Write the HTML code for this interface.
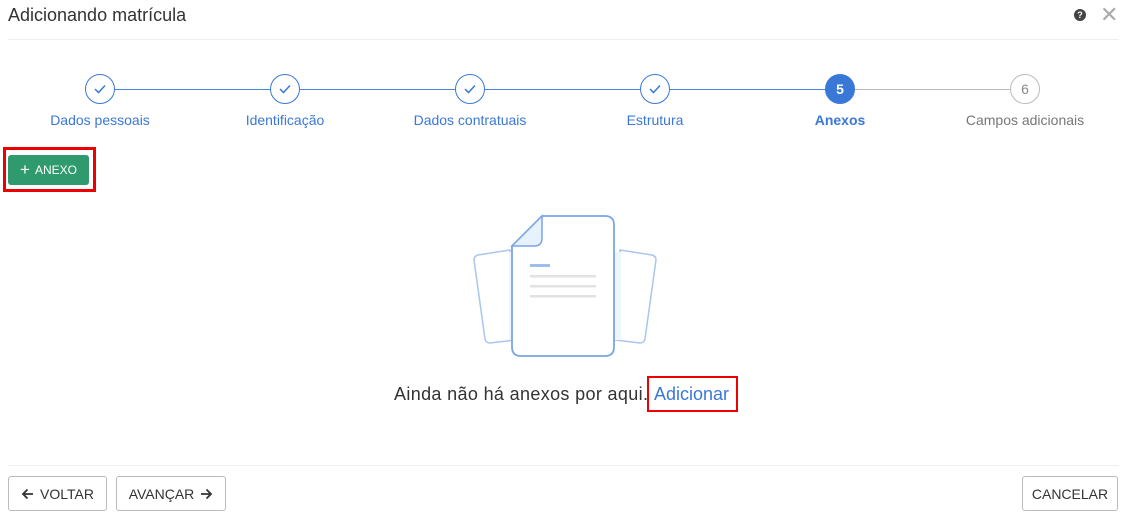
<!DOCTYPE html>
<html><head><meta charset="utf-8"><style>
*{box-sizing:border-box;margin:0;padding:0}
body{width:1129px;height:516px;background:#fff;font-family:"Liberation Sans",sans-serif;position:relative;overflow:hidden;color:#333}
.abs{position:absolute}
.title{left:8px;top:5px;font-size:18px;color:#333}
.hr{left:8px;right:10px;height:1px;background:#eee}
.circ{width:30px;height:30px;border-radius:50%;border:1.5px solid #3a78d8;background:#fff;display:flex;align-items:center;justify-content:center;font-size:14px}
.lab{font-size:14px;color:#3a78d8;width:200px;text-align:center;top:112px}
.btn{border:1px solid #bbb;border-radius:3px;height:35px;top:476px;font-size:14px;display:flex;align-items:center;justify-content:center;color:#333}
</style></head><body>
<div class="abs title">Adicionando matrícula</div>
<div class="abs" style="left:1074px;top:9px;width:12px;height:12px;border-radius:50%;background:#444;color:#fff;font-size:9px;font-weight:bold;text-align:center;line-height:12px">?</div>
<div class="abs" style="left:1100px;top:2px;font-size:22px;color:#aaa">✕</div>
<div class="abs hr" style="top:39px"></div>
<div class="abs" style="left:100px;top:89px;width:740px;height:1px;background:#4a86e0"></div>
<div class="abs" style="left:840px;top:89px;width:185px;height:1px;background:#bbb"></div>
<div class="abs circ" style="left:85px;top:74px"><svg width="12" height="10"><path d="M1 5l3.5 3.5L11 1.5" stroke="#3a78d8" stroke-width="1.5" fill="none"/></svg></div>
<div class="abs circ" style="left:270px;top:74px"><svg width="12" height="10"><path d="M1 5l3.5 3.5L11 1.5" stroke="#3a78d8" stroke-width="1.5" fill="none"/></svg></div>
<div class="abs circ" style="left:455px;top:74px"><svg width="12" height="10"><path d="M1 5l3.5 3.5L11 1.5" stroke="#3a78d8" stroke-width="1.5" fill="none"/></svg></div>
<div class="abs circ" style="left:640px;top:74px"><svg width="12" height="10"><path d="M1 5l3.5 3.5L11 1.5" stroke="#3a78d8" stroke-width="1.5" fill="none"/></svg></div>
<div class="abs circ" style="left:825px;top:74px;background:#3a78d8;color:#fff;font-weight:bold">5</div>
<div class="abs circ" style="left:1010px;top:74px;border:1px solid #bbb;color:#888">6</div>
<div class="abs lab" style="left:0">Dados pessoais</div>
<div class="abs lab" style="left:185px">Identificação</div>
<div class="abs lab" style="left:370px">Dados contratuais</div>
<div class="abs lab" style="left:555px">Estrutura</div>
<div class="abs lab" style="left:740px;font-weight:bold">Anexos</div>
<div class="abs lab" style="left:925px;color:#777">Campos adicionais</div>
<div class="abs" style="left:3px;top:147px;width:93px;height:45px;border:3px solid #e00"></div>
<div class="abs" style="left:8px;top:155px;width:81px;height:30px;background:#2f9a6e;border-radius:3px;color:#fff;font-size:12px;display:flex;align-items:center;justify-content:center"><span style="font-size:17px;margin-right:5px">+</span>ANEXO</div>
<svg class="abs" style="left:470px;top:212px" width="190" height="150">
<path d="M8 43 L40 38 L45 128 L20 131 Q16 131 15 127 L4 48 Q4 44 8 43Z" fill="#fff" stroke="#a8c6ee" stroke-width="1.5"/>
<path d="M182 43 L150 38 L145 128 L170 131 Q174 131 175 127 L186 48 Q186 44 182 43Z" fill="#fff" stroke="#a8c6ee" stroke-width="1.5"/>
<rect x="143" y="40" width="8" height="88" fill="#eef5fc"/>
<rect x="39" y="40" width="8" height="88" fill="#eef5fc"/>
<path d="M42 34 L72 4 L135 4 Q144 4 144 13 L144 135 Q144 144 135 144 L51 144 Q42 144 42 135Z" fill="#fff" stroke="#7aa6e4" stroke-width="1.8"/>
<path d="M42 34 L72 4 L72 26 Q72 34 64 34Z" fill="#e8f2fc" stroke="#7aa6e4" stroke-width="1.5"/>
<rect x="60" y="52" width="20" height="3" fill="#9dbdea"/>
<rect x="60" y="63" width="66" height="2.5" fill="#e2e2e2"/>
<rect x="60" y="73" width="66" height="2.5" fill="#e2e2e2"/>
<rect x="60" y="83" width="66" height="2.5" fill="#e2e2e2"/>
</svg>
<div class="abs" style="left:394px;top:384px;font-size:18px;color:#333;letter-spacing:0.35px">Ainda não há anexos por aqui.</div>
<div class="abs" style="left:647px;top:376px;width:91px;height:36px;border:2px solid #e00"></div>
<div class="abs" style="left:654px;top:384px;font-size:18px;color:#3a78d8">Adicionar</div>
<div class="abs hr" style="top:465px"></div>
<div class="abs btn" style="left:8px;width:99px"><svg width="13" height="12" style="margin-right:6px"><path d="M12 6H2M6.5 1.5L2 6l4.5 4.5" stroke="#333" stroke-width="1.8" fill="none"/></svg>VOLTAR</div>
<div class="abs btn" style="left:116px;width:110px">AVANÇAR<svg width="13" height="12" style="margin-left:6px"><path d="M1 6h10M6.5 1.5L11 6l-4.5 4.5" stroke="#333" stroke-width="1.8" fill="none"/></svg></div>
<div class="abs btn" style="left:1022px;width:96px">CANCELAR</div>
</body></html>
